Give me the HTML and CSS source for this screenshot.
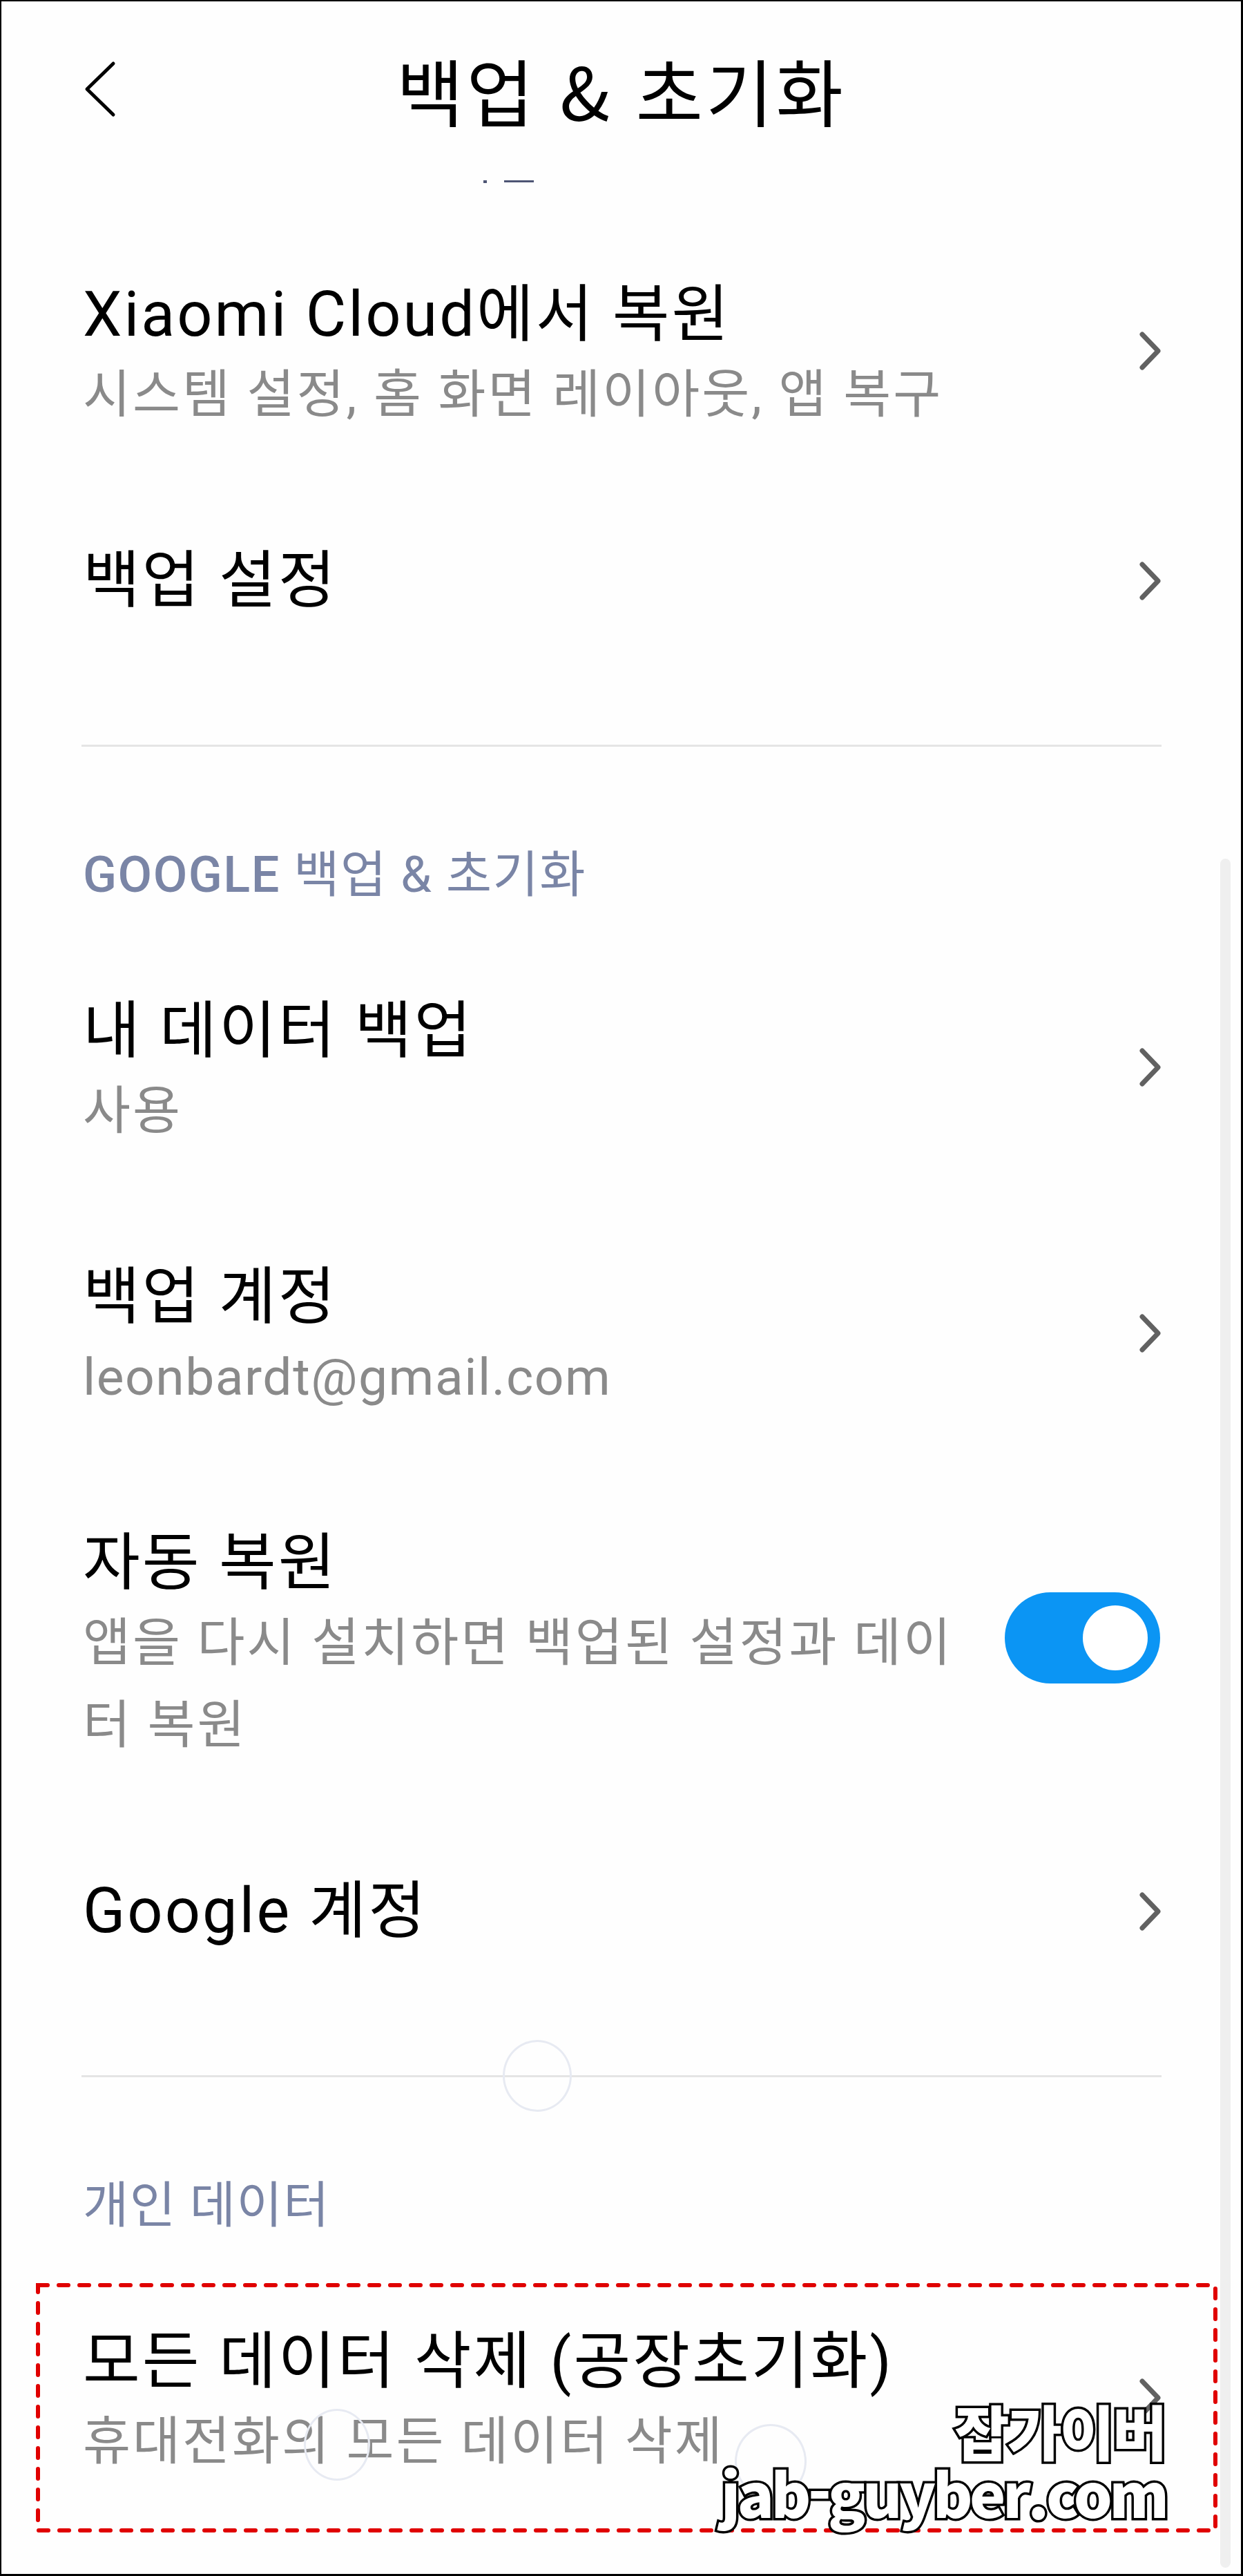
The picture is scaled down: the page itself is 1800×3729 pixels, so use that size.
FILE: index.html
```html
<!DOCTYPE html>
<html lang="ko">
<head>
<meta charset="utf-8">
<title>백업 &amp; 초기화</title>
<link rel="stylesheet" href="styles.css">
</head>
<body>
<div class="screen">
  <header class="topbar">
    <div class="back">
      <svg width="56" height="90" viewBox="0 0 56 90"><path d="M46 8 L8 45 L46 82" fill="none" stroke="#000" stroke-width="5" stroke-linecap="round" stroke-linejoin="round"/></svg>
    </div>
    <h1 class="title">백업 &amp; 초기화</h1>
    <div></div>
  </header>
  <div class="peek"><span class="peek-dot"></span><span class="peek-bar"></span></div>

  <div class="row two">
    <div class="text"><div class="t">Xiaomi Cloud에서 복원</div><div class="s">시스템 설정, 홈 화면 레이아웃, 앱 복구</div></div>
    <svg class="chev" width="36" height="60" viewBox="0 0 36 60"><path d="M6 6 L29 30 L6 54" fill="none" stroke="#616161" stroke-width="7" stroke-linecap="round" stroke-linejoin="round"/></svg>
  </div>
  <div class="row">
    <div class="text"><div class="t">백업 설정</div></div>
    <svg class="chev" width="36" height="60" viewBox="0 0 36 60"><path d="M6 6 L29 30 L6 54" fill="none" stroke="#616161" stroke-width="7" stroke-linecap="round" stroke-linejoin="round"/></svg>
  </div>

  <div class="divider"></div>
  <div class="section"><span class="en">GOOGLE</span> 백업 &amp; 초기화</div>

  <div class="row two">
    <div class="text"><div class="t">내 데이터 백업</div><div class="s">사용</div></div>
    <svg class="chev" width="36" height="60" viewBox="0 0 36 60"><path d="M6 6 L29 30 L6 54" fill="none" stroke="#616161" stroke-width="7" stroke-linecap="round" stroke-linejoin="round"/></svg>
  </div>
  <div class="row two">
    <div class="text"><div class="t">백업 계정</div><div class="s mail">leonbardt@gmail.com</div></div>
    <svg class="chev" width="36" height="60" viewBox="0 0 36 60"><path d="M6 6 L29 30 L6 54" fill="none" stroke="#616161" stroke-width="7" stroke-linecap="round" stroke-linejoin="round"/></svg>
  </div>
  <div class="row">
    <div class="text"><div class="t">자동 복원</div><div class="s narrow">앱을 다시 설치하면 백업된 설정과 데이터 복원</div></div>
    <div class="toggle"><span class="knob"></span></div>
  </div>
  <div class="row">
    <div class="text"><div class="t">Google 계정</div></div>
    <svg class="chev" width="36" height="60" viewBox="0 0 36 60"><path d="M6 6 L29 30 L6 54" fill="none" stroke="#616161" stroke-width="7" stroke-linecap="round" stroke-linejoin="round"/></svg>
  </div>

  <div class="divider"></div>
  <div class="section">개인 데이터</div>

  <div class="row two">
    <div class="text"><div class="t">모든 데이터 삭제 (공장초기화)</div><div class="s">휴대전화의 모든 데이터 삭제</div></div>
    <svg class="chev" width="36" height="60" viewBox="0 0 36 60"><path d="M6 6 L29 30 L6 54" fill="none" stroke="#616161" stroke-width="7" stroke-linecap="round" stroke-linejoin="round"/></svg>
  </div>

  <div class="scrollbar"></div>
  <span class="ring ring1"></span>
  <span class="ring ring2"></span>
  <span class="ring ring3"></span>

  <svg class="mark" width="1715" height="365" viewBox="0 0 1715 365"><rect x="5" y="5" width="1705" height="355" fill="none" stroke="#e00000" stroke-width="6" stroke-dasharray="14 16" stroke-linecap="round"/></svg>

  <div class="watermark">
    <div class="wm1">잡가이버</div>
    <div class="wm2">jab-guyber.com</div>
  </div>
</div>
</body>
</html>
```

FILE: styles.css
```css
html, body {
  margin: 0;
  padding: 0;
  background: #fff;
}

body {
  font-family: Roboto, "Noto Sans CJK KR", sans-serif;
}

.screen {
  position: relative;
  width: 1800px;
  height: 3729px;
  box-sizing: border-box;
  border: 3px solid #000;
  border-top-width: 2px;
  border-left-width: 2px;
  background: #fefefe;
  overflow: hidden;
}

.topbar {
  height: 254px;
  display: grid;
  grid-template-columns: 1fr auto 1fr;
  align-items: center;
}

.back {
  padding-left: 116px;
  display: flex;
  align-items: center;
}

.title {
  margin: 0;
  font-family: "Noto Sans CJK KR", sans-serif;
  font-size: 106px;
  font-weight: 400;
  letter-spacing: 4px;
  line-height: 1;
  color: #000;
}

.peek {
  height: 67px;
  box-sizing: border-box;
  padding: 5px 0 0 698px;
  display: flex;
  align-items: flex-start;
}

.peek-dot {
  width: 5px;
  height: 4px;
  background: #4d5574;
}

.peek-bar {
  margin-left: 25px;
  width: 43px;
  height: 3px;
  background: #4d5574;
}

.row {
  display: flex;
  align-items: center;
  padding: 77px 113px 77px 118px;
}

.text {
  flex: 1;
  min-width: 0;
}

.t {
  font-size: 90px;
  line-height: 112px;
  letter-spacing: 3px;
  color: #000;
}

.s {
  font-size: 75px;
  line-height: 119px;
  letter-spacing: 3px;
  color: #8a8a8a;
}

.s.mail {
  letter-spacing: 1.5px;
}

.s.narrow {
  max-width: 1280px;
}

.chev {
  flex: none;
  display: block;
}

.row.two .chev {
  margin-bottom: 16px;
}

.toggle {
  flex: none;
  width: 225px;
  height: 132px;
  margin-right: 4px;
  margin-bottom: 22px;
  box-sizing: border-box;
  border-radius: 66px;
  background: #0b95f4;
  display: flex;
  align-items: center;
  justify-content: flex-end;
  padding-right: 18px;
}

.knob {
  width: 94px;
  height: 94px;
  border-radius: 50%;
  background: #fff;
}

.divider {
  margin: 104px 115px 0 116px;
  height: 3px;
  background: #e5e5e5;
}

.section {
  padding: 146px 118px 53px;
  font-size: 72px;
  line-height: 80px;
  letter-spacing: 1.5px;
  color: #7a85a6;
}

.section .en {
  font-weight: 500;
}

.scrollbar {
  position: absolute;
  left: 1765px;
  top: 1241px;
  width: 15px;
  height: 2474px;
  border-radius: 8px;
  background: #efefef;
}

.ring {
  position: absolute;
  box-sizing: border-box;
  border-radius: 50%;
  border: 3px solid #e7eaf2;
}

.ring1 { left: 726px; top: 2951px; width: 100px; height: 104px; }
.ring2 { left: 438px; top: 3485px; width: 96px; height: 104px; }
.ring3 { left: 1062px; top: 3507px; width: 104px; height: 108px; }

.mark {
  position: absolute;
  left: 48px;
  top: 3301px;
}

.watermark {
  position: absolute;
  right: 113px;
  top: 3471px;
  text-align: right;
  font-family: "Noto Sans CJK KR", sans-serif;
  font-weight: 900;
  color: #fff;
  -webkit-text-stroke: 7px #000;
  paint-order: stroke fill;
}

.wm1 {
  font-size: 86px;
  line-height: 90px;
  letter-spacing: -3px;
  margin-right: -3px;
}

.wm2 {
  font-size: 88px;
  line-height: 88px;
  letter-spacing: -4.5px;
  margin-right: -4.5px;
}
```
